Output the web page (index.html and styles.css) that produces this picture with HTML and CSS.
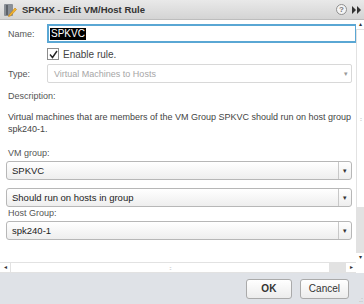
FILE: index.html
```html
<!DOCTYPE html>
<html lang="en">
<head>
    <meta charset="UTF-8">
    <title>Edit VM/Host Rule</title>
    <link rel="stylesheet" href="styles.css">
</head>
<body>
    <div class="dialog">
        <div class="titlebar">
            <svg class="app-icon" width="14" height="14" viewBox="0 0 14 14">
                <rect x="1" y="1" width="9" height="12" rx="1" fill="#8a8f96"/>
                <rect x="3" y="2" width="2" height="10" fill="#5d6269"/>
                <path d="M6 12 L12 5 L13.5 6.5 L7.5 13 L5.5 13.5 Z" fill="#f2b630" stroke="#c47f12" stroke-width="0.6"/>
            </svg>
            <span class="title">SPKHX - Edit VM/Host Rule</span>
            <span class="tools">
                <span class="help">?</span>
                <svg width="9" height="8" viewBox="0 0 9 8"><path d="M0 0 L4 4 L0 8 Z M5 0 L9 4 L5 8 Z" fill="#333"/></svg>
            </span>
        </div>

        <div class="main">
            <div class="form">
                <div class="row">
                    <label class="lbl">Name:</label>
                    <div class="name-input"><span class="sel">SPKVC</span></div>
                </div>
                <div class="check-row">
                    <span class="checkbox">
                        <svg width="9" height="9" viewBox="0 0 9 9"><path d="M1 4.5 L3.5 7.5 L8 1" fill="none" stroke="#222" stroke-width="1.4"/></svg>
                    </span>
                    Enable rule.
                </div>
                <div class="row">
                    <label class="lbl">Type:</label>
                    <div class="type-input">Virtual Machines to Hosts<span class="caret">&#9662;</span></div>
                </div>
                <div class="section-label desc-label">Description:</div>
                <p class="desc">Virtual machines that are members of the VM Group SPKVC should run on host group spk240-1.</p>
                <div class="section-label vm-label">VM group:</div>
                <div class="select">SPKVC<span class="arrow">&#9662;</span></div>
                <div class="select second">Should run on hosts in group<span class="arrow">&#9662;</span></div>
                <div class="section-label host-label">Host Group:</div>
                <div class="select">spk240-1<span class="arrow">&#9662;</span></div>
            </div>

            <div class="vscroll">
                <span class="sb-arrow">&#9652;</span>
                <div class="vthumb"><span class="grip">::</span></div>
                <div class="vtrack"></div>
                <span class="sb-arrow">&#9662;</span>
            </div>

            <div class="hscroll">
                <span class="sb-arrow">&#9666;</span>
                <div class="hthumb"><span class="grip">::</span></div>
                <div class="htrack"></div>
                <span class="sb-arrow">&#9656;</span>
            </div>
            <div class="corner"></div>
        </div>

        <div class="footer">
            <button class="btn ok">OK</button>
            <button class="btn">Cancel</button>
            <span class="resize">.:</span>
        </div>
    </div>
</body>
</html>
```

FILE: styles.css
```css
body {
    margin: 0;
    font-family: "Liberation Sans", Arial, sans-serif;
    font-size: 9px;
    color: #333;
}
.dialog {
    width: 364px;
    height: 304px;
    display: flex;
    flex-direction: column;
    background: #fff;
    overflow: hidden;
}

/* Title */
.titlebar {
    height: 19px;
    flex: none;
    display: flex;
    align-items: center;
    padding: 0 3px;
    background: linear-gradient(#e9e9e9, #d4d4d4);
    border-bottom: 1px solid #bdbdbd;
}
.app-icon {
    margin-right: 5px;
}
.title {
    font-weight: bold;
    font-size: 9.5px;
    color: #333;
}
.tools {
    margin-left: auto;
    display: flex;
    align-items: center;
    gap: 5px;
}
.help {
    width: 9px;
    height: 9px;
    border: 1px solid #8f8f8f;
    border-radius: 50%;
    background: #f4f4f4;
    font-size: 8px;
    font-weight: bold;
    color: #777;
    display: flex;
    align-items: center;
    justify-content: center;
}

/* Body with scrollbars */
.main {
    flex: 1;
    display: grid;
    grid-template-columns: 1fr 8px;
    grid-template-rows: 1fr 11px;
}
.form {
    padding: 4px 4px 0 8px;
    overflow: hidden;
}
.row {
    display: flex;
    align-items: center;
}
.lbl {
    width: 39px;
    color: #555;
}
.name-input {
    flex: 1;
    height: 15px;
    margin-right: -5px;
    border: 2px solid #5aa7d4;
    display: flex;
    align-items: center;
    padding-left: 1px;
}
.sel {
    background: #000;
    color: #fff;
    font-size: 10px;
    line-height: 12px;
    padding: 0 1px;
}
.check-row {
    display: flex;
    align-items: center;
    gap: 4px;
    margin: 5px 0 0 39px;
    height: 12px;
    font-size: 10px;
    color: #444;
}
.checkbox {
    width: 10px;
    height: 10px;
    border: 1px solid #8c8c8c;
    background: #fff;
    display: flex;
    align-items: center;
    justify-content: center;
}
.check-row + .row {
    margin-top: 4px;
}
.type-input {
    flex: 1;
    height: 17px;
    border: 1px solid #d8d8d8;
    border-radius: 2px;
    color: #a6a6a6;
    display: flex;
    align-items: center;
    padding-left: 6px;
}
.caret {
    margin-left: auto;
    margin-right: 3px;
    color: #999;
    font-size: 7px;
}
.section-label {
    color: #555;
}
.desc-label {
    margin-top: 8px;
}
.desc {
    margin: 10px 0 0;
    line-height: 12px;
    color: #444;
}
.vm-label {
    margin-top: 13px;
}
.select {
    height: 17px;
    margin: 3px 0 0 -2px;
    border: 1px solid #b7b7b7;
    border-radius: 3px;
    background: linear-gradient(#ffffff, #eeeeee);
    display: flex;
    align-items: center;
    padding-left: 5px;
    color: #222;
    font-size: 9.5px;
}
.select.second {
    margin-top: 8px;
}
.arrow {
    margin-left: auto;
    width: 12px;
    height: 100%;
    border-left: 1px solid #c8c8c8;
    display: flex;
    align-items: center;
    justify-content: center;
    font-size: 7px;
    color: #333;
}
.host-label {
    margin-top: 1px;
}

/* Scrollbars */
.vscroll {
    display: flex;
    flex-direction: column;
    align-items: stretch;
    background: #fff;
}
.sb-arrow {
    font-size: 6px;
    line-height: 9px;
    text-align: center;
    color: #333;
}
.vthumb {
    height: 177px;
    border: 1px solid #e2e2e2;
    border-right: none;
    display: flex;
    align-items: center;
    justify-content: center;
}
.vtrack {
    flex: 1;
    background: #e2e2e2;
}
.grip {
    font-size: 6px;
    color: #999;
    letter-spacing: -1px;
}
.hscroll {
    display: flex;
    align-items: stretch;
    border-top: 1px solid #e2e2e2;
    border-bottom: 1px solid #e2e2e2;
}
.hscroll .sb-arrow {
    width: 10px;
    line-height: 9px;
}
.hthumb {
    width: 318px;
    border-left: 1px solid #e2e2e2;
    border-right: 1px solid #e2e2e2;
    display: flex;
    align-items: center;
    justify-content: center;
}
.htrack {
    flex: 1;
    background: #e2e2e2;
}
.corner {
    background: #fff;
}

/* Footer */
.footer {
    height: 31px;
    flex: none;
    background: #dfe2e7;
    display: flex;
    align-items: center;
    justify-content: flex-end;
    gap: 8px;
    padding-right: 15px;
    position: relative;
}
.btn {
    height: 20px;
    min-width: 46px;
    padding: 0 8px;
    border: 1px solid #aaa;
    border-radius: 3px;
    background: linear-gradient(#ffffff, #ececec);
    font-family: "Liberation Sans", Arial, sans-serif;
    font-size: 10px;
    color: #333;
}
.btn.ok {
    font-weight: bold;
}
.resize {
    position: absolute;
    right: 1px;
    bottom: 1px;
    font-size: 7px;
    color: #aaa;
}
```
